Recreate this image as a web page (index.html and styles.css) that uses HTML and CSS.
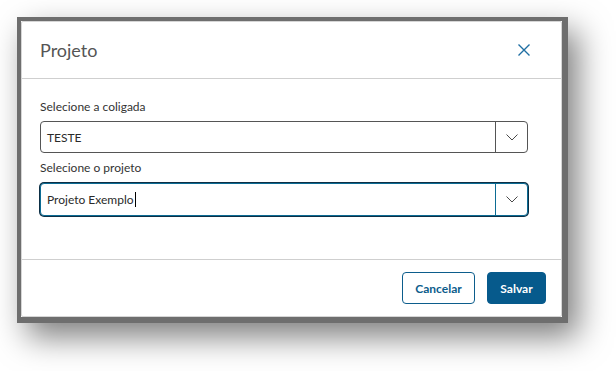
FILE: index.html
```html
<!DOCTYPE html>
<html lang="pt-BR">
<head>
<meta charset="utf-8">
<title>Projeto</title>
<link rel="stylesheet" href="styles.css">
</head>
<body>
<div class="page">
  <div class="frame">
    <div class="dialog">
      <header class="dlg-head">
        <h1 class="dlg-title">Projeto</h1>
        <button class="dlg-close" aria-label="Fechar">
          <svg width="12" height="12" viewBox="0 0 12 12"><path d="M0.5 0.5 L11.5 11.5 M11.5 0.5 L0.5 11.5" stroke="#1f6fa3" stroke-width="1.4" fill="none"/></svg>
        </button>
      </header>
      <div class="dlg-body">
        <div class="field">
          <label class="field-label">Selecione a coligada</label>
          <div class="select">
            <span class="select-value">TESTE</span>
            <span class="select-arrow">
              <svg width="12" height="7" viewBox="0 0 12 7"><path d="M0.5 0.5 L6 6 L11.5 0.5" stroke="#4a4a4a" stroke-width="1" fill="none"/></svg>
            </span>
          </div>
        </div>
        <div class="field">
          <label class="field-label">Selecione o projeto</label>
          <div class="select focused">
            <span class="select-value">Projeto Exemplo<span class="caret"></span></span>
            <span class="select-arrow">
              <svg width="12" height="7" viewBox="0 0 12 7"><path d="M0.5 0.5 L6 6 L11.5 0.5" stroke="#4a4a4a" stroke-width="1" fill="none"/></svg>
            </span>
          </div>
        </div>
      </div>
      <footer class="dlg-foot">
        <button class="btn btn-secondary">Cancelar</button>
        <button class="btn btn-primary">Salvar</button>
      </footer>
    </div>
  </div>
</div>
</body>
</html>
```

FILE: styles.css
```css
* { box-sizing: border-box; }
html, body { margin: 0; padding: 0; background: #ffffff; }
body {
  font-family: Lato, "Liberation Sans", sans-serif;
  color: #333;
  min-height: 371px;
}

.page {
  padding: 17px 0 0 17px;
  min-height: 371px;
}

.frame {
  width: 551px;
  height: 306px;
  border-style: solid;
  border-color: #6e6e6e;
  border-width: 4px 6px 6px 4px;
  box-shadow: 10px 14px 30px rgba(0, 0, 0, 0.5);
}

.dialog {
  width: 100%;
  height: 100%;
  background: #fff;
  border: 1px solid #d6d6d6;
  border-radius: 2px;
  display: flex;
  flex-direction: column;
}

.dlg-head {
  height: 57px;
  flex: none;
  display: flex;
  align-items: center;
  justify-content: space-between;
  padding: 0 31px 0 18px;
  border-bottom: 1px solid #cfcfcf;
}

.dlg-title {
  margin: 0;
  font-size: 18px;
  font-weight: 400;
  color: #555;
  line-height: 24px;
}

.dlg-close {
  border: 0;
  background: none;
  padding: 0;
  width: 12px;
  height: 12px;
  display: flex;
}

.dlg-body {
  flex: 1;
  padding: 20px 33px 0 18px;
  display: flex;
  flex-direction: column;
  gap: 7px;
}

.field {
  display: flex;
  flex-direction: column;
  gap: 6px;
}

.field-label {
  font-size: 12px;
  line-height: 16px;
  color: #333;
}

.select {
  height: 32px;
  display: flex;
  border: 1px solid #555;
  border-radius: 4px;
  background: #fff;
}

.select-value {
  flex: 1;
  display: flex;
  align-items: center;
  padding-left: 6px;
  font-size: 12px;
  color: #2a2a2a;
}

.select-arrow {
  width: 32px;
  flex: none;
  display: flex;
  align-items: center;
  justify-content: center;
  border-left: 1px solid #555;
}

.select.focused {
  border-color: #0c6c94;
  box-shadow: 0 0 0 1px #0d2f45;
  height: 33px;
  margin-top: 1px;
}

.select.focused .select-arrow {
  border-left-color: #0c6c94;
}

.caret {
  display: inline-block;
  width: 1px;
  height: 15px;
  background: #000;
  margin-left: 1px;
}

.dlg-foot {
  height: 57px;
  flex: none;
  display: flex;
  justify-content: flex-end;
  align-items: flex-start;
  gap: 12px;
  padding: 12px 15px 0 0;
  border-top: 1px solid #cfcfcf;
}

.btn {
  height: 32px;
  border-radius: 4px;
  font-family: Lato, "Liberation Sans", sans-serif;
  font-size: 12px;
  font-weight: 700;
  padding: 0;
}

.btn-secondary {
  width: 73px;
  background: #fff;
  border: 1px solid #0c5d8c;
  color: #0c5d8c;
}

.btn-primary {
  width: 59px;
  background: #065a8c;
  border: 1px solid #065a8c;
  color: #fff;
}
```
